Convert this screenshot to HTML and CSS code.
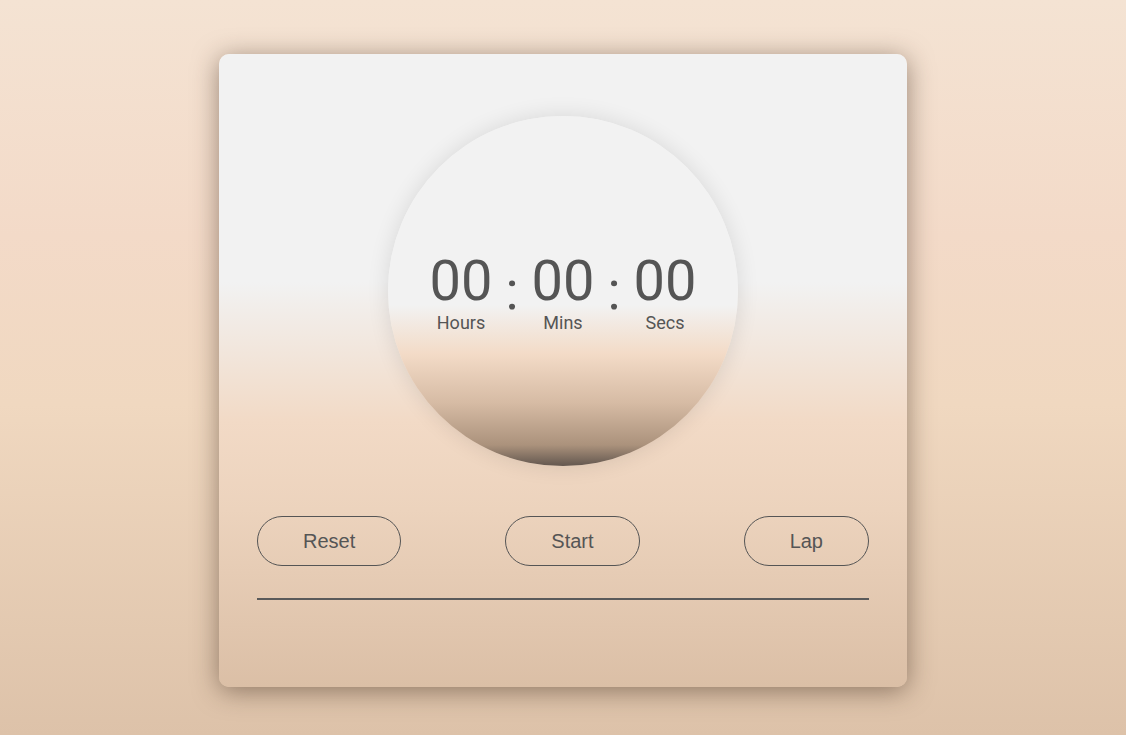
FILE: index.html
```html
<!DOCTYPE html>
<html lang="en">
<head>
<meta charset="utf-8">
<title>Stopwatch</title>
<link rel="stylesheet" href="styles.css">
</head>
<body>
<main class="card">
  <div class="dial">
    <div class="display">
      <div class="unit">
        <span class="digits">00</span>
        <span class="label">Hours</span>
      </div>
      <span class="colon">:</span>
      <div class="unit">
        <span class="digits">00</span>
        <span class="label">Mins</span>
      </div>
      <span class="colon">:</span>
      <div class="unit">
        <span class="digits">00</span>
        <span class="label">Secs</span>
      </div>
    </div>
  </div>
  <div class="controls">
    <button class="btn">Reset</button>
    <button class="btn">Start</button>
    <button class="btn">Lap</button>
  </div>
  <div class="divider"></div>
  <ul class="laps"></ul>
</main>
</body>
</html>
```
FILE: styles.css
```css
html, body {
  margin: 0;
  height: 100%;
}
body {
  background: linear-gradient(to bottom, #f4e3d3 0%, #f3dac8 32%, #f0d8c0 55%, #ddc2a9 100%);
  font-family: Roboto, "Liberation Sans", sans-serif;
  color: #555;
  padding-top: 54px;
  box-sizing: border-box;
}
.card {
  width: 688px;
  height: 633px;
  margin: 0 auto;
  box-sizing: border-box;
  padding: 62px 38px 0;
  border-radius: 10px;
  background: linear-gradient(to bottom, #f2f2f2 0%, #f2f2f2 36%, #f2dac6 58%, #ecd3bd 72%, #dbbfa6 100%);
  box-shadow: 0 4px 26px rgba(60, 40, 25, 0.5);
  display: flex;
  flex-direction: column;
  align-items: stretch;
}
.dial {
  width: 350px;
  height: 350px;
  border-radius: 50%;
  align-self: center;
  background: linear-gradient(to bottom, #f2f2f2 0%, #f2f2f2 54%, #f3dbc7 68%, #d6bba4 82%, #ab927c 94%, #63574f 100%);
  box-shadow: 0 0 22px rgba(0, 0, 0, 0.11);
  display: flex;
  align-items: center;
  justify-content: center;
}
.display {
  display: flex;
  align-items: flex-start;
  margin-top: 2px;
}
.unit {
  width: 80px;
  display: flex;
  flex-direction: column;
  align-items: center;
}
.digits {
  font-size: 56px;
  line-height: 56px;
  color: #555;
}
.label {
  font-size: 18px;
  line-height: 18px;
  margin-top: 5px;
  color: #555;
}
.colon {
  width: 22px;
  text-align: center;
  font-size: 54px;
  line-height: 54px;
  margin-top: 11px;
  color: #555;
}
.controls {
  display: flex;
  justify-content: space-between;
  margin-top: 50px;
}
.btn {
  height: 50px;
  box-sizing: border-box;
  padding: 0 45px;
  border: 1px solid #555;
  border-radius: 25px;
  background: transparent;
  font-family: "Liberation Sans", Arial, sans-serif;
  font-size: 20px;
  color: #555;
}
.divider {
  height: 2px;
  background: #5a5a5a;
  margin-top: 32px;
}
.laps {
  margin: 0;
  padding: 0;
  list-style: none;
}
```
